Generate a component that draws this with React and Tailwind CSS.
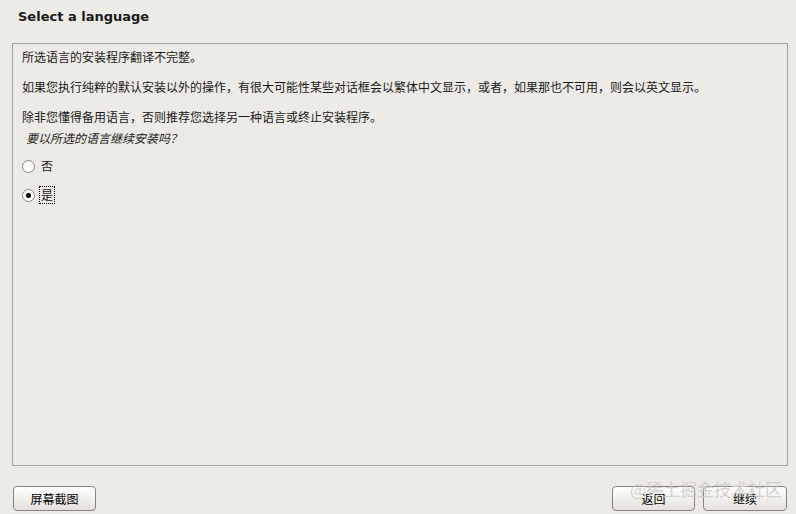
import React, { useState } from 'react'

const cjk = { fontFamily: '"Noto Sans CJK SC", "DejaVu Sans", sans-serif' }

function Radio({ checked, label, onClick }) {
    return (
        <div className="flex h-[18px] cursor-pointer items-center" onClick={onClick}>
            <span className="flex h-[13px] w-[13px] items-center justify-center rounded-full border border-[#8d8b86] bg-gradient-to-b from-[#f6f5f3] to-white">
                {checked && <span className="h-[5px] w-[5px] rounded-full bg-black" />}
            </span>
            <span className={`ml-[5px] px-[1px] leading-[16px] ${checked ? 'outline outline-1 outline-dotted outline-black' : ''}`}>
                {label}
            </span>
        </div>
    )
}

function Button({ children, className = '' }) {
    return (
        <button className={`h-[25px] rounded-[4px] border border-[#87847e] bg-gradient-to-b from-white to-[#e4e1db] text-[12px] text-black ${className}`}>
            {children}
        </button>
    )
}

export default function App() {
    const [choice, setChoice] = useState('yes')

    return (
        <div className="relative flex h-[514px] w-[796px] flex-col overflow-hidden bg-[#edebe6] text-[12px] text-[#1a1a1a]" style={cjk}>
            <div className="h-[43px] pl-[18px] pt-[9px] text-[13px] font-bold leading-[16px]" style={{ fontFamily: '"DejaVu Sans", sans-serif' }}>
                Select a language
            </div>

            <div className="ml-[12px] mr-[8px] h-[423px] border border-[#a8a5a0] px-[9px] pt-[5px]">
                <p className="leading-[16px]">所选语言的安装程序翻译不完整。</p>
                <p className="mt-[14px] leading-[16px]">如果您执行纯粹的默认安装以外的操作，有很大可能性某些对话框会以繁体中文显示，或者，如果那也不可用，则会以英文显示。</p>
                <p className="mt-[14px] leading-[16px]">除非您懂得备用语言，否则推荐您选择另一种语言或终止安装程序。</p>
                <p className="mt-[5px] pl-[4px] italic leading-[16px]">要以所选的语言继续安装吗？</p>
                <div className="mt-[11px]">
                    <Radio label="否" checked={choice === 'no'} onClick={() => setChoice('no')} />
                </div>
                <div className="mt-[11px]">
                    <Radio label="是" checked={choice === 'yes'} onClick={() => setChoice('yes')} />
                </div>
            </div>

            <div className="mt-[20px] flex pl-[13px] pr-[9px]">
                <Button className="w-[83px]">屏幕截图</Button>
                <div className="flex-1" />
                <Button className="w-[83px]">返回</Button>
                <Button className="ml-[8px] w-[84px]">继续</Button>
            </div>

            {/* watermark over the buttons */}
            <div className="pointer-events-none absolute left-[630px] top-[478px] text-[17px] leading-[22px] text-[#cfccc7]/90">
                @稀土掘金技术社区
            </div>
        </div>
    )
}
